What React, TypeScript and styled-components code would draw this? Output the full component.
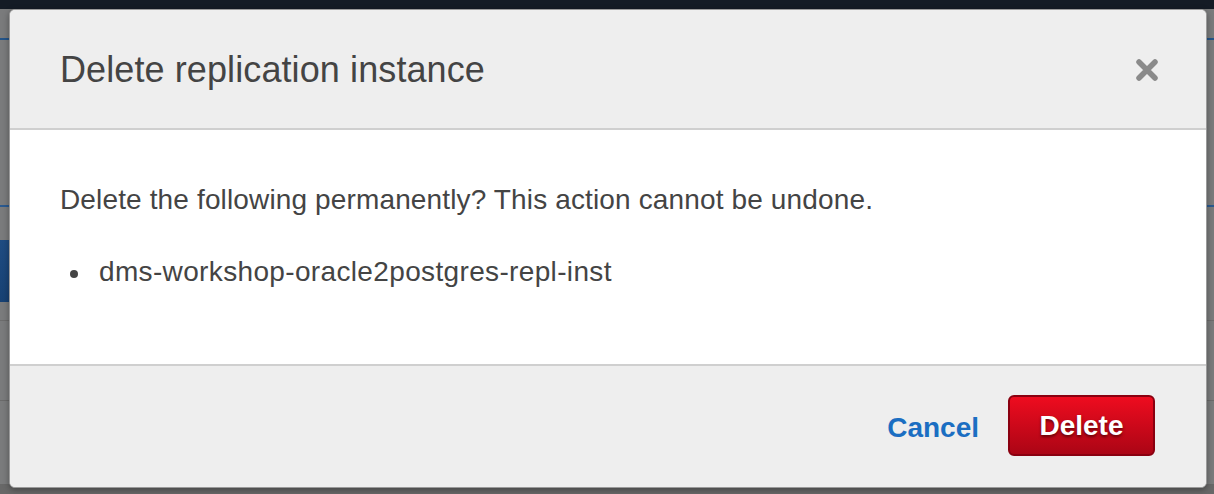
import React from "react";
import styled, { createGlobalStyle } from "styled-components";

const Global = createGlobalStyle`
  html, body { margin: 0; padding: 0; }
  body {
    width: 1214px;
    height: 494px;
    overflow: hidden;
    background: #7a7b7c;
    font-family: "Liberation Sans", Arial, Helvetica, sans-serif;
  }
`;

const Page = styled.div`
  width: 1214px;
  height: 494px;
  box-sizing: border-box;
  padding: 9px 7px 6px 9px;
  background:
    linear-gradient(#141b25, #141b25) 0 0 / 100% 9px no-repeat,
    linear-gradient(#245488, #245488) 0 38px / 100% 2px no-repeat,
    linear-gradient(#2a5a90, #2a5a90) 0 205px / 100% 2px no-repeat,
    linear-gradient(#1f4c82, #174173) 0 240px / 9px 62px no-repeat,
    linear-gradient(#6c6c6c, #6c6c6c) 0 320px / 100% 1px no-repeat,
    linear-gradient(#6a6a6a, #6a6a6a) 0 400px / 100% 1px no-repeat,
    linear-gradient(#686868, #686868) 0 484px / 100% 10px no-repeat,
    #7a7b7c;
`;

const Modal = styled.div`
  display: flex;
  flex-direction: column;
  width: 1198px;
  height: 479px;
  box-sizing: border-box;
  border-radius: 6px;
  overflow: hidden;
  background: #eeeeee;
  border: 1px solid #9a9a9a;
  box-shadow: 0 2px 6px rgba(0, 0, 0, 0.35);
`;

const Header = styled.div`
  display: flex;
  align-items: center;
  justify-content: space-between;
  height: 118px;
  padding: 0 50px;
  border-bottom: 2px solid #cfcfcf;
  background: #eeeeee;
`;

const Title = styled.h2`
  margin: 0;
  padding-top: 2px;
  font-size: 36px;
  font-weight: 400;
  color: #444444;
  letter-spacing: 0.1px;
`;

const CloseButton = styled.button`
  display: flex;
  align-items: center;
  justify-content: center;
  width: 28px;
  height: 28px;
  padding: 0;
  margin: 2px -5px 0 0;
  border: none;
  background: transparent;
  cursor: pointer;
`;

const Body = styled.div`
  height: 236px;
  box-sizing: border-box;
  padding: 52px 50px 0;
  background: #ffffff;
  border-bottom: 2px solid #cfcfcf;
  color: #444444;
  font-size: 28px;
  letter-spacing: 0.14px;
`;

const Message = styled.p`
  margin: 0;
  line-height: 1.3;
`;

const List = styled.ul`
  list-style: none;
  margin: 36px 0 0;
  padding: 0 0 0 10px;
  line-height: 1.3;
  letter-spacing: 0.35px;
`;

const Item = styled.li`
  display: flex;
  align-items: center;
  gap: 21px;

  &::before {
    content: "";
    flex: none;
    width: 8px;
    height: 8px;
    border-radius: 50%;
    background: #444444;
    margin-top: 3px;
  }
`;

const Footer = styled.div`
  flex: 1;
  display: flex;
  align-items: center;
  justify-content: flex-end;
  gap: 29px;
  padding: 0 51px 0 50px;
  background: #eeeeee;
`;

const CancelLink = styled.button`
  border: none;
  background: transparent;
  padding: 0;
  margin-top: 2px;
  font-family: inherit;
  font-size: 28px;
  font-weight: 700;
  color: #1b6ec2;
  cursor: pointer;
`;

const DangerButton = styled.button`
  width: 147px;
  height: 61px;
  box-sizing: border-box;
  margin-top: -2px;
  border: 2px solid #8a0010;
  border-radius: 6px;
  background: linear-gradient(#ee0c1f, #ab0515);
  color: #ffffff;
  font-family: inherit;
  font-size: 28px;
  font-weight: 700;
  text-shadow: 0 2px 3px rgba(60, 0, 0, 0.7);
  cursor: pointer;
`;

export default function App() {
  return (
    <>
      <Global />
      <Page>
        <Modal>
          <Header>
            <Title>Delete replication instance</Title>
            <CloseButton aria-label="Close">
              <svg width="24" height="24" viewBox="0 0 24 24">
                <path
                  d="M4 4 L20 20 M20 4 L4 20"
                  stroke="#8a8a8a"
                  strokeWidth="5.5"
                  strokeLinecap="round"
                />
              </svg>
            </CloseButton>
          </Header>
          <Body>
            <Message>Delete the following permanently? This action cannot be undone.</Message>
            <List>
              <Item>dms-workshop-oracle2postgres-repl-inst</Item>
            </List>
          </Body>
          <Footer>
            <CancelLink>Cancel</CancelLink>
            <DangerButton>Delete</DangerButton>
          </Footer>
        </Modal>
      </Page>
    </>
  );
}
